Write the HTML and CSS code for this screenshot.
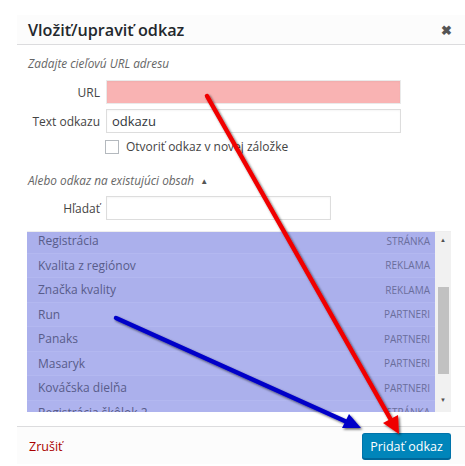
FILE: index.html
```html
<!DOCTYPE html>
<html lang="sk">
<head>
    <meta charset="UTF-8">
    <title>Vložiť/upraviť odkaz</title>
    <link rel="stylesheet" href="styles.css">
</head>
<body>
    <!-- Link dialog -->
    <div class="dialog">
        <div class="dialog-header">
            <h1>Vložiť/upraviť odkaz</h1>
            <span class="close">&#10006;</span>
        </div>

        <div class="dialog-body">
            <p class="hint">Zadajte cieľovú URL adresu</p>
            <div class="field">
                <label for="url">URL</label>
                <input type="text" id="url" class="url-input">
            </div>
            <div class="field">
                <label for="link_text">Text odkazu</label>
                <input type="text" id="link_text" value="odkazu">
            </div>
            <div class="check-row">
                <span class="checkbox"></span>
                <span>Otvoriť odkaz v novej záložke</span>
            </div>

            <p class="hint toggle">Alebo odkaz na existujúci obsah <span class="caret">&#9650;</span></p>
            <div class="field search">
                <label for="search">Hľadať</label>
                <input type="text" id="search">
            </div>

            <div class="results">
                <ul class="result-list">
                    <li><span>Registrácia</span><span class="type">Stránka</span></li>
                    <li><span>Kvalita z regiónov</span><span class="type">Reklama</span></li>
                    <li><span>Značka kvality</span><span class="type">Reklama</span></li>
                    <li><span>Run</span><span class="type">Partneri</span></li>
                    <li><span>Panaks</span><span class="type">Partneri</span></li>
                    <li><span>Masaryk</span><span class="type">Partneri</span></li>
                    <li><span>Kováčska dielňa</span><span class="type">Partneri</span></li>
                    <li><span>Registrácia škôlok 2</span><span class="type">Stránka</span></li>
                </ul>
                <div class="scrollbar">
                    <span class="arrow">&#9650;</span>
                    <span class="thumb"></span>
                    <span class="arrow">&#9660;</span>
                </div>
            </div>
        </div>

        <div class="dialog-footer">
            <a href="#" class="cancel">Zrušiť</a>
            <button type="button">Pridať odkaz</button>
        </div>
    </div>

    <!-- Annotation arrows drawn over the screenshot -->
    <svg class="arrows" width="465" height="466" viewBox="0 0 465 466">
        <defs>
            <filter id="shadow" x="-10%" y="-10%" width="120%" height="120%">
                <feDropShadow dx="1.5" dy="1.5" stdDeviation="1" flood-color="#000" flood-opacity="0.6"/>
            </filter>
        </defs>
        <g filter="url(#shadow)">
            <line x1="207" y1="96" x2="391" y2="420" stroke="#f00000" stroke-width="4.5" stroke-linecap="round"/>
            <polygon points="383,423 398,415 399,434" fill="#f00000"/>
            <line x1="116" y1="318" x2="347" y2="422" stroke="#0000c8" stroke-width="4.5" stroke-linecap="round"/>
            <polygon points="342,428 349,414 361,428" fill="#0000c8"/>
        </g>
    </svg>
</body>
</html>
```

FILE: styles.css
```css
/* Reset */
* {
    margin: 0;
    padding: 0;
    box-sizing: border-box;
}

body {
    font-family: 'Open Sans', 'Liberation Sans', sans-serif;
    background-color: #fff;
    color: #32373c;
    width: 465px;
    height: 466px;
    overflow: hidden;
    position: relative;
}

/* Dialog frame */
.dialog {
    margin: 15px 0 0 17px;
    width: 448px;
    background-color: #fff;
}

.dialog-header {
    height: 30px;
    background-color: #fcfcfc;
    border-bottom: 1px solid #dcdcde;
    display: flex;
    align-items: center;
    justify-content: space-between;
    padding: 0 13px 0 11px;
}

.dialog-header h1 {
    font-size: 16.2px;
    font-weight: 600;
    color: #23282d;
    line-height: 22px;
}

.close {
    font-size: 13px;
    color: #555;
    font-weight: bold;
}

/* Body */
.dialog-body {
    padding: 9px 14px 0 11px;
}

.hint {
    font-size: 11.8px;
    font-style: italic;
    color: #666;
    line-height: 18px;
    margin-bottom: 8px;
}

.field {
    display: grid;
    grid-template-columns: 72px 295px;
    column-gap: 6px;
    align-items: center;
    margin-bottom: 5px;
}

.field label {
    text-align: right;
    font-size: 12px;
    color: #444;
}

.field input {
    height: 24px;
    border: 1px solid #ddd;
    background-color: #fff;
    font-family: inherit;
    font-size: 13px;
    color: #32373c;
    padding: 0 5px;
    box-shadow: inset 0 1px 2px rgba(0, 0, 0, 0.04);
}

.field .url-input {
    background-color: #f9b3b3;
    border-color: #eaeaea;
}

.field.search {
    grid-template-columns: 72px 225px;
    margin: 6px 0 11px;
}

.check-row {
    display: flex;
    align-items: center;
    gap: 7px;
    margin: 2px 0 0 77px;
    font-size: 12px;
    color: #444;
}

.checkbox {
    width: 14px;
    height: 14px;
    border: 1px solid #b4b9be;
    background-color: #fff;
}

.toggle {
    margin-top: 16px;
    margin-bottom: 0;
}

.caret {
    font-style: normal;
    font-size: 8px;
    color: #555;
    margin-left: 3px;
    vertical-align: 1px;
}

/* Search results */
.results {
    border-top: 1px solid #eee;
    margin-left: -1px;
    height: 182px;
    display: flex;
}

.result-list {
    list-style: none;
    width: 408px;
    height: 180px;
    overflow: hidden;
    background-color: #aeb3ee;
}

.result-list li {
    height: 24.5px;
    display: flex;
    align-items: center;
    justify-content: space-between;
    padding: 0 5px 0 11px;
    border-bottom: 1px solid #b3b8f0;
    font-size: 12px;
    color: #585c8a;
}

.result-list li:first-child {
    margin-top: -3px;
}

.result-list li:nth-child(odd) {
    background-color: #abb0ec;
}

.type {
    font-size: 10px;
    text-transform: uppercase;
    color: #6a6e9c;
}

.scrollbar {
    width: 16px;
    height: 180px;
    background-color: #f1f1f1;
    display: flex;
    flex-direction: column;
    align-items: center;
}

.scrollbar .arrow {
    font-size: 6px;
    color: #505050;
    height: 16px;
    line-height: 16px;
}

.thumb {
    width: 11px;
    height: 87px;
    background-color: #c1c1c1;
    margin: 39px 0 18px;
}

/* Footer */
.dialog-footer {
    margin-top: 13px;
    height: 38px;
    background-color: #fcfcfc;
    border-top: 1px solid #dcdcde;
    display: flex;
    align-items: center;
    justify-content: space-between;
    padding: 1px 14px 0 12px;
}

.cancel {
    color: #a00;
    font-size: 12.5px;
    text-decoration: none;
}

button {
    height: 26px;
    width: 89px;
    padding: 0;
    background-color: #0085ba;
    border: 1px solid #0073aa;
    border-bottom-color: #006799;
    border-radius: 3px;
    color: #fff;
    font-family: inherit;
    font-size: 12.5px;
    box-shadow: 0 1px 0 #006799;
}

/* Overlay with annotation arrows */
.arrows {
    position: absolute;
    top: 0;
    left: 0;
    pointer-events: none;
}
```
